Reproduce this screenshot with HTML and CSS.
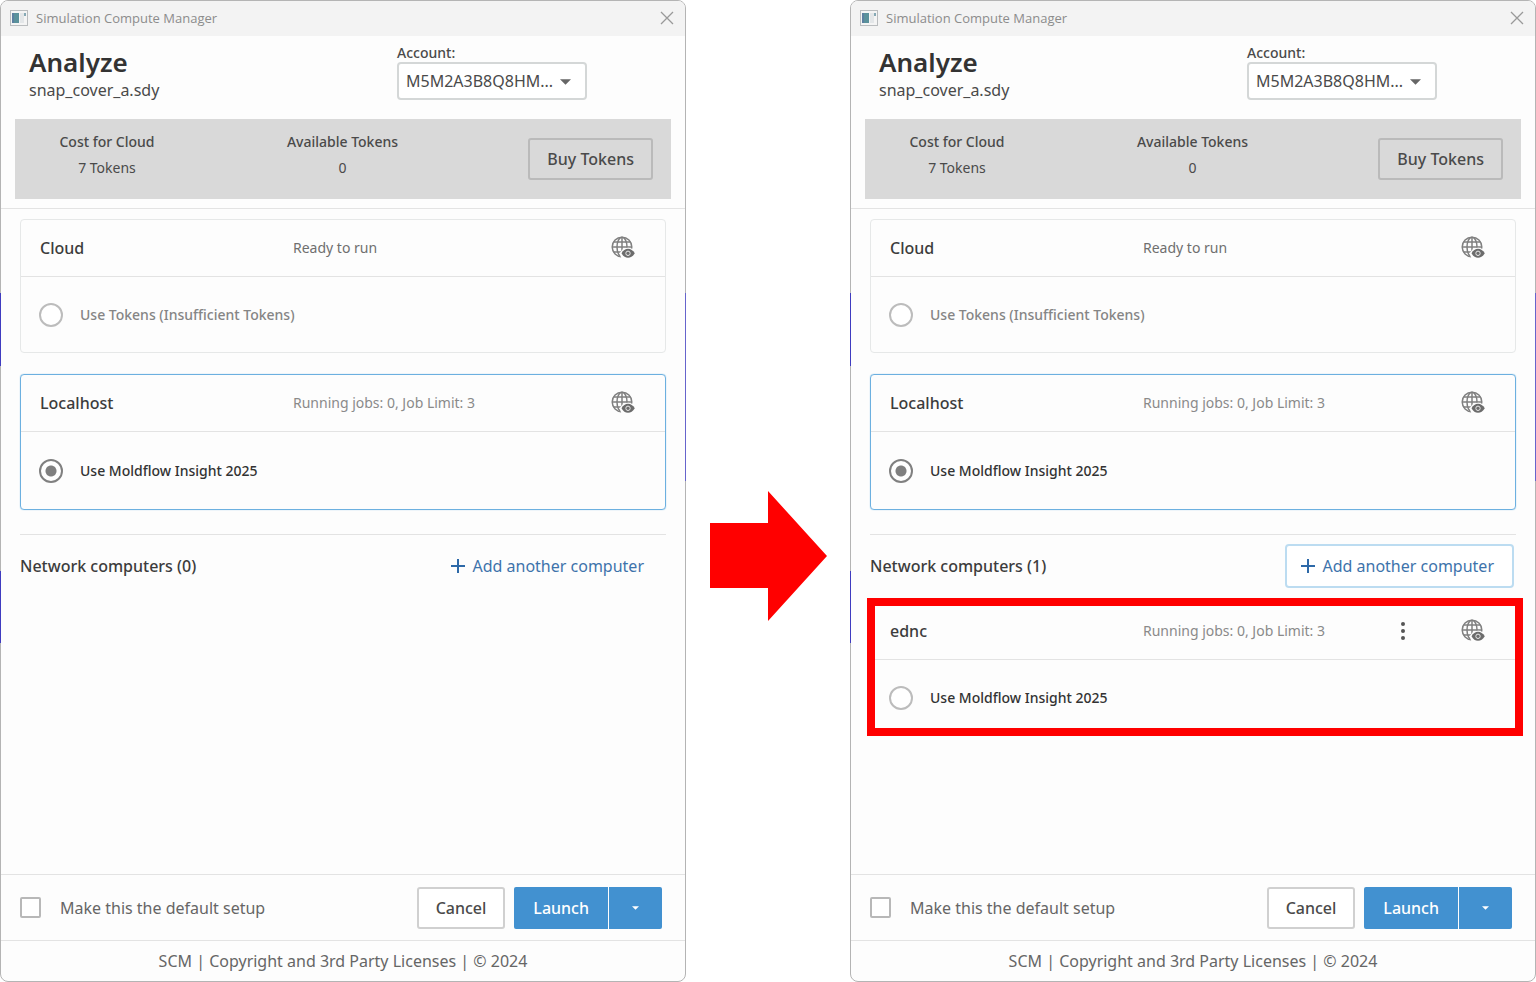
FILE: index.html
```html
<!DOCTYPE html>
<html lang="en">
<head>
<meta charset="utf-8">
<title>Simulation Compute Manager</title>
<link rel="stylesheet" href="styles.css">
</head>
<body>
<svg class="sprite" aria-hidden="true">
  <symbol id="app" viewBox="0 0 18 16">
    <rect x="0.5" y="0.5" width="17" height="15" fill="#f4f4f4" stroke="#b9bcbe"/>
    <rect x="2" y="3" width="7" height="10" fill="#5a919b"/>
    <rect x="2" y="3" width="2" height="10" fill="#5b7fa0"/>
    <rect x="10" y="3" width="4" height="10" fill="#e3e6e8"/>
    <rect x="14" y="3" width="2" height="3" fill="#86a9b5"/>
  </symbol>
  <symbol id="close" viewBox="0 0 14 14">
    <path d="M1 1 13 13M13 1 1 13" fill="none" stroke="#999" stroke-width="1.300"/>
  </symbol>
  <symbol id="globe" viewBox="0 0 24 24">
    <g fill="none" stroke="#808080" stroke-width="1.500">
      <circle cx="11" cy="11" r="9.800"/>
      <ellipse cx="11" cy="11" rx="5" ry="9.800"/>
      <path d="M11 1v20M2.500 6h17M1 11h20M2.500 16h17"/>
    </g>
    <path d="M8.500 17.300Q11.500 11.700 17 11.700T25 17.300V24H11Z" fill="#fdfdfd"/>
    <path d="M10.500 17.300Q13 12.800 17 12.800T23.800 17.300Q21 21.800 17 21.800T10.500 17.300Z" fill="#6c6c6c"/>
    <circle cx="17" cy="17.300" r="2.200" fill="none" stroke="#e8e8e8" stroke-width="1"/>
  </symbol>
  <symbol id="plus" viewBox="0 0 14 14">
    <path d="M7 0v14M0 7h14" fill="none" stroke="#2d69a8" stroke-width="2"/>
  </symbol>
  <symbol id="kebab" viewBox="0 0 4 18">
    <circle cx="2" cy="2" r="2"/><circle cx="2" cy="9" r="2"/><circle cx="2" cy="16" r="2"/>
  </symbol>
  <symbol id="caret" viewBox="0 0 12 6">
    <path d="M0 0h12L6 6Z"/>
  </symbol>
</svg>

<main class="stage">
  <section class="window">
    <span class="sliver sliver-a"></span><span class="sliver sliver-b"></span><span class="sliver sliver-c"></span>
    <header class="titlebar">
      <svg class="icon-app"><use href="#app"/></svg>
      <span class="titlebar-text">Simulation Compute Manager</span>
      <button class="bare" aria-label="Close"><svg class="icon-close"><use href="#close"/></svg></button>
    </header>
    <div class="intro">
      <div class="study">
        <h1 class="heading">Analyze</h1>
        <p class="filename">snap_cover_a.sdy</p>
      </div>
      <div class="account">
        <label class="account-label" for="account-1">Account:</label>
        <div class="select-wrap">
          <select class="select" id="account-1"><option>M5M2A3B8Q8HM...</option></select>
          <svg class="icon-caret"><use href="#caret"/></svg>
        </div>
      </div>
    </div>
    <div class="tokens">
      <dl class="token"><dt>Cost for Cloud</dt><dd>7 Tokens</dd></dl>
      <dl class="token"><dt>Available Tokens</dt><dd>0</dd></dl>
      <button class="btn btn-buy">Buy Tokens</button>
    </div>
    <div class="content">
      <article class="card">
        <div class="card-head">
          <h2 class="card-name">Cloud</h2>
          <span class="status status-ready">Ready to run</span>
          <button class="bare" aria-label="View cloud jobs"><svg class="icon-globe"><use href="#globe"/></svg></button>
        </div>
        <label class="choice choice-off"><input class="radio" type="radio" name="target-1">Use Tokens (Insufficient Tokens)</label>
      </article>
      <article class="card card-selected">
        <div class="card-head">
          <h2 class="card-name">Localhost</h2>
          <span class="status">Running jobs: 0, Job Limit: 3</span>
          <button class="bare" aria-label="View localhost jobs"><svg class="icon-globe"><use href="#globe"/></svg></button>
        </div>
        <label class="choice"><input class="radio" type="radio" name="target-1" checked>Use Moldflow Insight 2025</label>
      </article>
      <div class="network">
        <h2 class="card-name">Network computers (0)</h2>
        <button class="btn-add"><svg class="icon-plus"><use href="#plus"/></svg>Add another computer</button>
      </div>
    </div>
    <div class="actions">
      <label class="default"><input class="check" type="checkbox">Make this the default setup</label>
      <button class="btn">Cancel</button>
      <div class="split">
        <button class="btn-launch">Launch</button>
        <button class="btn-launch btn-more" aria-label="Launch options"><svg class="icon-more"><use href="#caret"/></svg></button>
      </div>
    </div>
    <footer class="legal">SCM | Copyright and 3rd Party Licenses | © 2024</footer>
  </section>

  <div class="between">
    <svg class="arrow" viewBox="0 0 117 130" role="img" aria-label="Leads to"><path d="M0 32H58V0L117 65 58 130V97H0Z" fill="#f00"/></svg>
  </div>

  <section class="window">
    <span class="sliver sliver-a"></span><span class="sliver sliver-b"></span><span class="sliver sliver-c"></span>
    <header class="titlebar">
      <svg class="icon-app"><use href="#app"/></svg>
      <span class="titlebar-text">Simulation Compute Manager</span>
      <button class="bare" aria-label="Close"><svg class="icon-close"><use href="#close"/></svg></button>
    </header>
    <div class="intro">
      <div class="study">
        <h1 class="heading">Analyze</h1>
        <p class="filename">snap_cover_a.sdy</p>
      </div>
      <div class="account">
        <label class="account-label" for="account-2">Account:</label>
        <div class="select-wrap">
          <select class="select" id="account-2"><option>M5M2A3B8Q8HM...</option></select>
          <svg class="icon-caret"><use href="#caret"/></svg>
        </div>
      </div>
    </div>
    <div class="tokens">
      <dl class="token"><dt>Cost for Cloud</dt><dd>7 Tokens</dd></dl>
      <dl class="token"><dt>Available Tokens</dt><dd>0</dd></dl>
      <button class="btn btn-buy">Buy Tokens</button>
    </div>
    <div class="content">
      <article class="card">
        <div class="card-head">
          <h2 class="card-name">Cloud</h2>
          <span class="status status-ready">Ready to run</span>
          <button class="bare" aria-label="View cloud jobs"><svg class="icon-globe"><use href="#globe"/></svg></button>
        </div>
        <label class="choice choice-off"><input class="radio" type="radio" name="target-2">Use Tokens (Insufficient Tokens)</label>
      </article>
      <article class="card card-selected">
        <div class="card-head">
          <h2 class="card-name">Localhost</h2>
          <span class="status">Running jobs: 0, Job Limit: 3</span>
          <button class="bare" aria-label="View localhost jobs"><svg class="icon-globe"><use href="#globe"/></svg></button>
        </div>
        <label class="choice"><input class="radio" type="radio" name="target-2" checked>Use Moldflow Insight 2025</label>
      </article>
      <div class="network">
        <h2 class="card-name">Network computers (1)</h2>
        <button class="btn-add btn-add-focus"><svg class="icon-plus"><use href="#plus"/></svg>Add another computer</button>
      </div>
      <article class="card card-marked">
        <div class="card-head">
          <h2 class="card-name">ednc</h2>
          <span class="status">Running jobs: 0, Job Limit: 3</span>
          <button class="bare bare-menu" aria-label="More actions"><svg class="icon-kebab"><use href="#kebab"/></svg></button>
          <button class="bare" aria-label="View ednc jobs"><svg class="icon-globe"><use href="#globe"/></svg></button>
        </div>
        <label class="choice"><input class="radio" type="radio" name="target-2">Use Moldflow Insight 2025</label>
      </article>
    </div>
    <div class="actions">
      <label class="default"><input class="check" type="checkbox">Make this the default setup</label>
      <button class="btn">Cancel</button>
      <div class="split">
        <button class="btn-launch">Launch</button>
        <button class="btn-launch btn-more" aria-label="Launch options"><svg class="icon-more"><use href="#caret"/></svg></button>
      </div>
    </div>
    <footer class="legal">SCM | Copyright and 3rd Party Licenses | © 2024</footer>
  </section>
</main>
</body>
</html>
```
FILE: styles.css
```css
* { box-sizing: border-box; }
body {
  margin: 0;
  background: #fff;
  color: #4a4a4a;
  font: 16px/20px "Noto Sans", "Open Sans", sans-serif;
}
h1, h2, p, dl, dd { margin: 0; }
button, select, input { font: inherit; color: inherit; margin: 0; }
svg { display: block; flex: none; }
.sprite { position: absolute; width: 0; height: 0; }

.stage {
  display: grid;
  grid-template-columns: 1fr 164px 1fr;
  min-height: 100vh;
}
.window {
  position: relative;
  display: flex;
  flex-direction: column;
  border: 1px solid #b4b4b4;
  border-radius: 8px;
  background: #fdfdfd;
}
.between { display: flex; align-items: center; justify-content: center; padding-top: 130px; }
.arrow { width: 117px; height: 130px; }

/* Slices of the desktop that show along the window edges */
.sliver { position: absolute; width: 1px; background: #3f3cc0; }
.sliver-a { left: -1px; top: 292px; height: 73px; }
.sliver-b { left: -1px; top: 570px; height: 72px; }
.sliver-c { right: -1px; top: 292px; height: 188px; background: #6664cc; }

.titlebar {
  display: flex;
  align-items: center;
  gap: 8px;
  height: 35px;
  padding: 0 11px 2px 9px;
  border-radius: 7px 7px 0 0;
  background: #f3f3f3;
  color: #8c8c8c;
  font: 13px/20px "Open Sans", "Noto Sans", sans-serif;
}
.titlebar-text { flex: 1; }
.bare { padding: 0; border: 0; background: none; }
.icon-app { width: 18px; height: 16px; }
.icon-close { width: 14px; height: 14px; }

.intro { display: flex; justify-content: space-between; padding: 8px 98px 19px 28px; }
.heading { font-size: 26px; line-height: 36px; font-weight: 600; color: #333; }
.filename { line-height: 20px; }
.account-label { display: block; font-size: 14px; line-height: 18px; font-weight: 500; }
.select-wrap { position: relative; width: 190px; }
.select {
  appearance: none;
  width: 100%;
  height: 38px;
  padding: 0 24px 0 7px;
  border: 2px solid #d4d7d7;
  border-radius: 4px;
  background: #fff;
}
.icon-caret { position: absolute; right: 16px; top: 17px; width: 11px; height: 6px; fill: #666; pointer-events: none; }

.tokens {
  display: grid;
  grid-template-columns: 184px 1fr 167px;
  align-items: center;
  height: 80px;
  margin: 0 14px 9px;
  padding-right: 18px;
  background: #d9d9d9;
}
.token { padding-bottom: 8px; font-size: 14px; line-height: 26px; text-align: center; }
.token dt { font-weight: 500; }
.btn {
  height: 42px;
  padding: 0 17px;
  border: 2px solid #d0d0d0;
  border-radius: 3px;
  background: #fff;
  font-weight: 500;
}
.btn-buy { justify-self: end; background: none; border-color: #bababa; }

.content { flex: 1; padding: 10px 19px 0; border-top: 1px solid #e3e3e3; }
.card { position: relative; margin-bottom: 21px; border: 1px solid #e6e8e8; border-radius: 4px; }
.card-selected { border-color: #6cb0e0; box-shadow: 0 0 1px #6cb0e0; margin-bottom: 24px; }
.card-head {
  display: grid;
  grid-template-columns: 253px 1fr auto auto;
  align-items: center;
  height: 57px;
  padding: 0 30px 0 19px;
  border-bottom: 1px solid #e3e3e3;
}
.card-head .bare:last-child { grid-column: 4; }
.bare-menu { margin-right: 56px; }
.card-name { padding-bottom: 1px; font-size: 16px; line-height: 20px; font-weight: 500; color: #3c3c3c; }
.status { font-size: 14px; color: #8a8a8a; }
.status-ready { color: #6f6f6f; }
.icon-globe { width: 24px; height: 24px; }
.icon-kebab { width: 4px; height: 18px; fill: #555; }
.choice {
  display: flex;
  align-items: center;
  gap: 17px;
  height: 75px;
  padding-left: 18px;
  font-size: 14px;
  font-weight: 500;
  color: #333;
}
.card-selected .choice { height: 77px; }
.choice-off { color: #858585; }
.radio {
  appearance: none;
  width: 24px;
  height: 24px;
  border: 2px solid #bcbcbc;
  border-radius: 50%;
  background: #fff;
}
.radio:checked {
  border-color: #808080;
  background: radial-gradient(circle, #808080 5px, #fff 6px);
}
.network {
  display: flex;
  align-items: center;
  justify-content: space-between;
  height: 63px;
  border-top: 1px solid #e3e3e3;
}
.btn-add {
  display: flex;
  align-items: center;
  gap: 7px;
  height: 44px;
  margin-right: 2px;
  padding: 0 18px 0 14px;
  border: 2px solid transparent;
  border-radius: 4px;
  background: none;
  color: #3d73ab;
}
.btn-add-focus { border-color: #bcdcf1; background: #fff; }
.icon-plus { width: 14px; height: 14px; }
.card-marked { margin-top: 5px; }
.card-marked::after {
  content: "";
  position: absolute;
  inset: -5px -8px -1px -4px;
  border: 8px solid #f00;
  pointer-events: none;
}

.actions {
  display: flex;
  align-items: center;
  gap: 9px;
  height: 66px;
  padding: 0 23px 0 19px;
  border-top: 1px solid #e3e3e3;
}
.default { display: flex; align-items: center; gap: 19px; flex: 1; color: #666; }
.check {
  appearance: none;
  width: 21px;
  height: 21px;
  border: 2px solid #b8b8b8;
  border-radius: 2px;
  background: #fff;
}
.split { display: flex; gap: 1px; }
.btn-launch {
  height: 42px;
  padding: 0 19px;
  border: 0;
  border-radius: 2px 0 0 2px;
  background: #4291d0;
  color: #fff;
  font-weight: 500;
}
.btn-more { display: grid; place-items: center; width: 53px; border-radius: 0 2px 2px 0; }
.icon-more { width: 7px; height: 4px; fill: #fff; }
.legal {
  height: 41px;
  border-top: 1px solid #e3e3e3;
  line-height: 40px;
  text-align: center;
  color: #666;
}
```
